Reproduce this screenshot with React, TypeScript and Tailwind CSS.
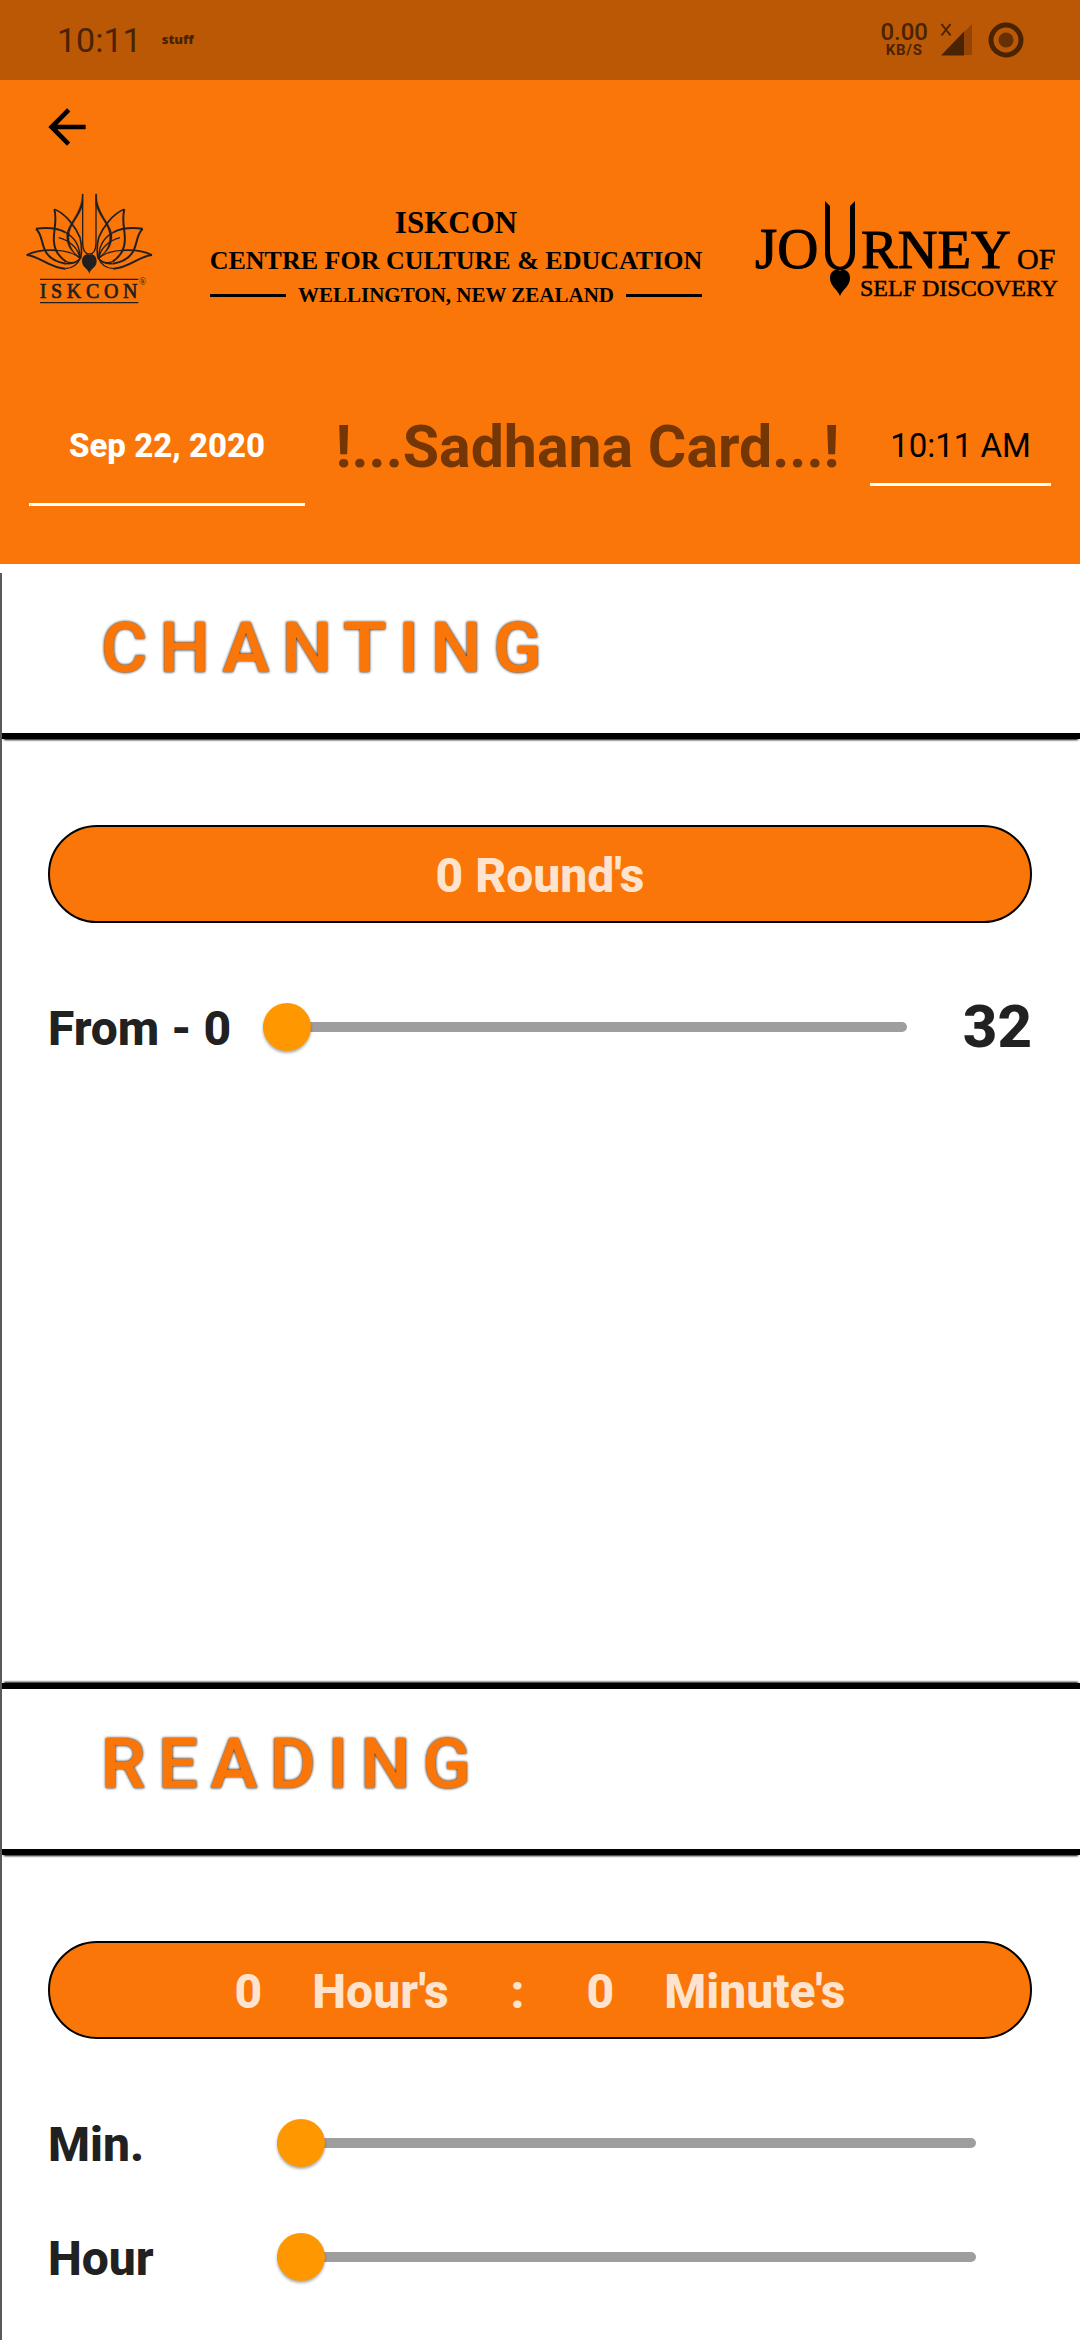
import { useState } from "react";
import type { ReactNode } from "react";

function StatusBar() {
  return (
    <div className="flex h-20 items-center justify-between bg-[#bb5805] pr-14 pl-[57px] text-[#4a2304]">
      <div className="flex items-center gap-5">
        <span className="text-[34px] leading-10">10:11</span>
        <span className="font-['Open_Sans',sans-serif] text-[13px] font-extrabold">stuff</span>
      </div>
      <div className="flex items-center">
        <div className="mr-3 flex flex-col items-center">
          <span className="text-2xl leading-5 font-medium">0.00</span>
          <span className="text-[15px] leading-4 font-bold tracking-wider">KB/S</span>
        </div>
        <svg className="mr-4 h-9 w-8" viewBox="0 0 32 36" aria-label="No signal">
          <path d="M24 10 L32 2 V33 H24 Z" fill="#944506" />
          <path d="M1 33.500 L24 9.500 V33.500 Z" fill="currentColor" />
          <path d="M1.500 2 L10.500 13.500 M10.500 2 L1.500 13.500" stroke="currentColor" strokeWidth="2" />
        </svg>
        <svg className="h-9 w-9" viewBox="0 0 36 36" aria-label="Battery">
          <circle cx="18" cy="18" r="15" fill="none" stroke="currentColor" strokeWidth="5" />
          <circle cx="18" cy="18" r="7.500" fill="#662f04" />
        </svg>
      </div>
    </div>
  );
}

function Petals() {
  return (
    <g fill="none" stroke="#231f20" strokeLinejoin="round">
      <path strokeWidth="4" d="M248 46 V190 C248 212 255 225 268 225" />
      <path
        fill="#231f20"
        stroke="#231f20"
        strokeWidth="1"
        d="M246 45 L249 45 V76 C240 112 208 138 207 170 C206 202 220 222 242 236 C214 222 199 200 200 168 C202 134 248 100 246 45 Z"
      />
      <path strokeWidth="6" d="M163 91 C173 128 158 160 162 190 C164 214 178 234 198 248" />
      <path strokeWidth="4" d="M198 248 C216 254 232 248 240 238" />
      <path strokeWidth="5" d="M163 91 C198 104 228 146 240 176 C245 196 246 216 242 238" />
      <path strokeWidth="6" d="M108 149 C126 166 122 184 134 212 C146 240 174 250 198 254" />
      <path strokeWidth="4" d="M198 254 C220 256 234 248 241 238" />
      <path strokeWidth="6" d="M108 149 C140 145 174 148 196 160" />
      <path strokeWidth="4" d="M196 160 C226 176 240 204 240 238 M176 176 C206 184 236 206 239 238" />
      <path strokeWidth="6" d="M80 228 C118 230 148 268 196 269" />
      <path strokeWidth="4" d="M196 269 C218 268 234 254 241 238" />
      <path strokeWidth="5" d="M80 228 C108 214 140 212 170 214" />
      <path strokeWidth="4" d="M170 214 C202 216 226 224 240 238" />
    </g>
  );
}

function LotusLogo() {
  return (
    <svg className="h-[120px] w-[140px] shrink-0" viewBox="60 30 420 360" role="img" aria-label="ISKCON">
      <Petals />
      <g transform="translate(536 0) scale(-1 1)">
        <Petals />
      </g>
      <path
        fill="#231f20"
        d="M268 284 C264 268 246 266 246 246 C246 228 262 222 268 228 C274 222 290 228 290 246 C290 266 272 268 268 284 Z"
      />
      <path stroke="#231f20" strokeWidth="4" d="M120 301 H415 M120 371 H415" />
      <text
        x="119"
        y="357"
        fontSize="60"
        letterSpacing="14"
        fill="#231f20"
        stroke="#231f20"
        strokeWidth="2"
        fontFamily="Liberation Serif, serif"
      >
        ISKCON
      </text>
      <text x="417" y="319" fontSize="28" fill="#231f20" fontFamily="Liberation Serif, serif">
        ®
      </text>
    </svg>
  );
}

function JourneyLogo() {
  return (
    <svg
      className="h-[110px] w-[308px] shrink-0"
      viewBox="752 195 308 110"
      role="img"
      aria-label="Journey of Self Discovery"
      fontFamily="Liberation Serif, serif"
    >
      <g stroke="#000">
        <text x="755" y="269" fontSize="57" strokeWidth="1">JO</text>
        <text x="861" y="269" fontSize="55" strokeWidth="1">RNEY</text>
        <text x="1017" y="270" fontSize="30" strokeWidth="0.500">OF</text>
        <text x="860" y="297" fontSize="24" strokeWidth="0.500">SELF DISCOVERY</text>
      </g>
      <path d="M825 202 L830 207 V252 C830 273 850 273 850 252 V207 L855 202 V254 C855 277 825 277 825 254 Z" />
      <path d="M840 297 C837 290 830 287 830 279 C830 272 836 269 840 272 C844 269 850 272 850 279 C850 287 843 290 840 297 Z" />
    </svg>
  );
}

function LogoRow() {
  return (
    <div className="flex items-center justify-between px-5">
      <LotusLogo />
      <div className="flex flex-col items-center pt-4 font-['Liberation_Serif',serif] font-bold text-black">
        <p className="text-[31px] leading-10">ISKCON</p>
        <p className="text-[26px] leading-9 whitespace-nowrap">CENTRE FOR CULTURE &amp; EDUCATION</p>
        <div className="flex w-full items-center gap-3">
          <span className="h-[3px] flex-1 bg-black" />
          <p className="text-[21px] leading-8 whitespace-nowrap">WELLINGTON, NEW ZEALAND</p>
          <span className="h-[3px] flex-1 bg-black" />
        </div>
      </div>
      <JourneyLogo />
    </div>
  );
}

function SectionHeading({ children }: { children: ReactNode }) {
  return (
    <h2 className="border-b-6 border-black pt-[39px] pr-4 pb-[49px] pl-[99px] text-[71px] leading-[72px] font-semibold tracking-[12px] text-[#fa7609] shadow-[0_3px_2px_-2px_#000] [text-shadow:0_0_3px_#000]">
      {children}
    </h2>
  );
}

function Pill({ children }: { children: ReactNode }) {
  return (
    <div className="flex h-[98px] items-center justify-center rounded-full border-2 border-black bg-[#fa7609] pt-1 text-5xl font-extrabold whitespace-pre text-[#fee4ce]">
      {children}
    </div>
  );
}

type SliderProps = { id: string; max: number; value: number; onChange: (value: number) => void };

function Slider({ id, max, value, onChange }: SliderProps) {
  return (
    <input
      id={id}
      type="range"
      min={0}
      max={max}
      value={value}
      onChange={(event) => onChange(Number(event.target.value))}
      className="h-12 min-w-0 flex-1 cursor-pointer appearance-none bg-transparent [&::-webkit-slider-runnable-track]:h-[10px] [&::-webkit-slider-runnable-track]:rounded-full [&::-webkit-slider-runnable-track]:bg-[#9e9e9e] [&::-webkit-slider-thumb]:-mt-[19px] [&::-webkit-slider-thumb]:size-12 [&::-webkit-slider-thumb]:appearance-none [&::-webkit-slider-thumb]:rounded-full [&::-webkit-slider-thumb]:bg-[#ff9800] [&::-webkit-slider-thumb]:shadow-[0_2px_3px_#0005]"
    />
  );
}

export default function App() {
  const [rounds, setRounds] = useState(0);
  const [minutes, setMinutes] = useState(0);
  const [hours, setHours] = useState(0);

  return (
    <div className="flex min-h-screen flex-col overflow-hidden bg-white font-[Roboto,sans-serif] text-[#212121]">
      <header className="bg-[#fa7609] pb-[58px]">
        <StatusBar />
        <div className="px-[39px] pt-[19px]">
          <button type="button" aria-label="Back" className="block text-black">
            <svg className="size-14" viewBox="0 0 24 24" fill="currentColor">
              <path d="M20 11H7.830l5.590-5.590L12 4l-8 8 8 8 1.410-1.410L7.830 13H20v-2z" />
            </svg>
          </button>
        </div>
        <div className="pt-8">
          <LogoRow />
        </div>
        <div className="mt-[98px] flex items-start justify-between pr-[29px] pl-[29px]">
          <button
            type="button"
            className="w-[276px] border-b-[3px] border-white pt-4 pb-9 text-[33px] leading-[42px] font-extrabold text-white"
          >
            Sep 22, 2020
          </button>
          <h1 className="pt-1 text-[59px] leading-[68px] font-bold whitespace-nowrap text-[#733604]">
            !...Sadhana Card...!
          </h1>
          <button
            type="button"
            className="w-[181px] border-b-[3px] border-white pt-4 pb-4 text-[33px] leading-[42px] text-black"
          >
            10:11 AM
          </button>
        </div>
      </header>

      <main className="mt-[9px] flex flex-1 flex-col border-l-2 border-[#5a5a5a]">
        <section>
          <SectionHeading>CHANTING</SectionHeading>
          <div className="pt-[86px] pr-12 pb-[620px] pl-[46px]">
            <Pill>{rounds} Round's</Pill>
            <div className="mt-[68px] flex items-center">
              <label htmlFor="rounds" className="mr-8 pt-1 text-5xl leading-[68px] font-extrabold">
                From - 0
              </label>
              <Slider id="rounds" max={32} value={rounds} onChange={setRounds} />
              <span className="ml-14 text-[60px] leading-[72px] font-extrabold">32</span>
            </div>
          </div>
        </section>

        <section className="flex-1 border-t-6 border-black shadow-[0_-3px_2px_-2px_#000]">
          <SectionHeading>READING</SectionHeading>
          <div className="pt-[86px] pr-12 pl-[46px]">
            <Pill>
              <span className="mr-[50px]">{hours}</span>
              <span className="mr-[62px]">Hour's</span>
              <span className="mr-[62px]">:</span>
              <span className="mr-[50px]">{minutes}</span>
              <span>Minute's</span>
            </Pill>
            <div className="mt-[68px] flex flex-col gap-[42px] pr-14">
              <div className="flex items-center">
                <label htmlFor="minutes" className="w-[229px] pt-1 text-5xl leading-[68px] font-extrabold">
                  Min.
                </label>
                <Slider id="minutes" max={59} value={minutes} onChange={setMinutes} />
              </div>
              <div className="flex items-center">
                <label htmlFor="hours" className="w-[229px] pt-1 text-5xl leading-[68px] font-extrabold">
                  Hour
                </label>
                <Slider id="hours" max={24} value={hours} onChange={setHours} />
              </div>
            </div>
          </div>
        </section>
      </main>
    </div>
  );
}
